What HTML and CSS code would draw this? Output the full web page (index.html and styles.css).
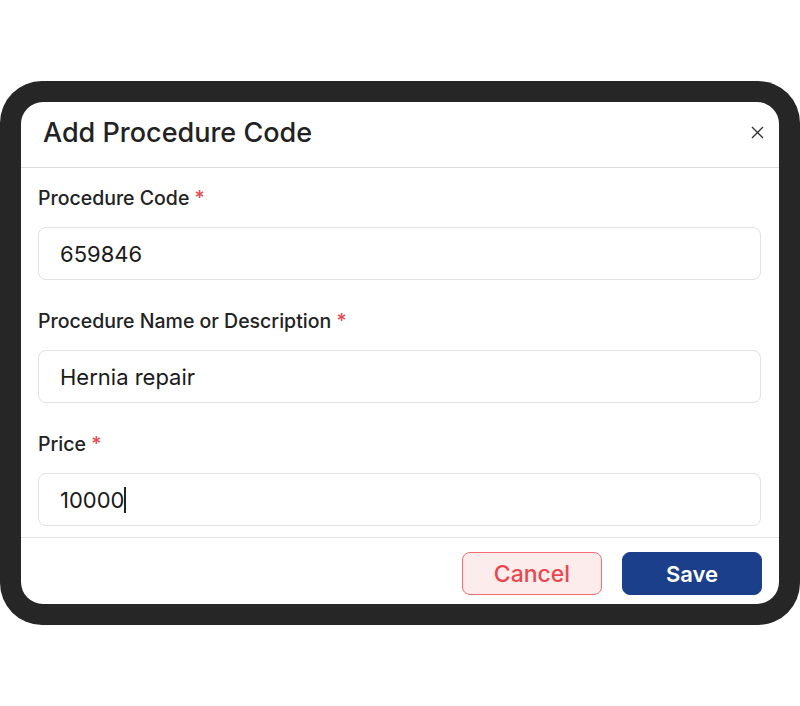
FILE: index.html
```html
<!DOCTYPE html>
<html lang="en">
<head>
  <meta charset="UTF-8">
  <title>Add Procedure Code</title>
  <link rel="stylesheet" href="styles.css">
</head>
<body>
  <div class="device">
    <div class="screen">
      <!-- Header -->
      <div class="modal-header">
        <h1 class="modal-title">Add Procedure Code</h1>
        <button class="close-btn" aria-label="Close">
          <svg width="13" height="13" viewBox="0 0 13 13"><path d="M1 1L12 12M12 1L1 12" stroke="#333" stroke-width="1.4" fill="none"/></svg>
        </button>
      </div>

      <!-- Form -->
      <div class="modal-body">
        <div class="field">
          <label>Procedure Code <span class="req">*</span></label>
          <div class="input">659846</div>
        </div>
        <div class="field">
          <label>Procedure Name or Description <span class="req">*</span></label>
          <div class="input">Hernia repair</div>
        </div>
        <div class="field">
          <label>Price <span class="req">*</span></label>
          <div class="input">10000<span class="caret"></span></div>
        </div>
      </div>

      <div class="modal-footer">
        <button class="btn btn-cancel">Cancel</button>
        <button class="btn btn-save">Save</button>
      </div>
    </div>
  </div>
</body>
</html>
```

FILE: styles.css
```css
body {
  margin: 0;
  padding: 81px 0 0;
  background: #fff;
  font-family: Inter, "Liberation Sans", sans-serif;
  color: #1f1f1f;
}
.device {
  width: 800px;
  height: 544px;
  box-sizing: border-box;
  padding: 21px;
  background: #262626;
  border-radius: 42px;
}
.screen {
  height: 100%;
  background: #fff;
  border-radius: 22px;
  overflow: hidden;
  display: flex;
  flex-direction: column;
}
.screen > div {
  flex-shrink: 0;
}
.modal-header {
  height: 66px;
  box-sizing: border-box;
  padding: 0 11px 4px 22px;
  display: flex;
  align-items: center;
  justify-content: space-between;
  border-bottom: 1px solid #dcdcdc;
}
.modal-title {
  margin: 0;
  font-size: 27px;
  font-weight: 500;
  color: #222;
}
.close-btn {
  background: none;
  border: none;
  padding: 4px;
  display: flex;
}
.modal-body {
  padding: 18px 18px 11px 17px;
  border-bottom: 1px solid #e3e3e3;
}
.field {
  margin-bottom: 29px;
}
.field:last-child {
  margin-bottom: 0;
}
.field label {
  display: block;
  font-size: 19.5px;
  font-weight: 500;
  color: #222;
  height: 24px;
  line-height: 24px;
  margin-bottom: 17px;
}
.req {
  color: #e5484d;
}
.input {
  height: 53px;
  box-sizing: border-box;
  border: 1px solid #e2e2e2;
  border-radius: 8px;
  padding: 0 21px;
  display: flex;
  align-items: center;
  font-size: 22px;
  color: #1a1a1a;
}
.caret {
  display: inline-block;
  width: 1.5px;
  height: 26px;
  background: #222;
}
.modal-footer {
  display: flex;
  justify-content: flex-end;
  gap: 20px;
  padding: 14px 17px 10px;
}
.btn {
  width: 140px;
  height: 43px;
  border-radius: 8px;
  font-family: inherit;
  font-size: 22px;
  font-weight: 600;
}
.btn-cancel {
  background: #fdecec;
  border: 1px solid #f06c72;
  color: #e8474f;
  font-weight: 500;
  font-size: 23px;
}
.btn-save {
  background: #1b3f8a;
  border: 1px solid #1b3f8a;
  color: #fff;
}
```
